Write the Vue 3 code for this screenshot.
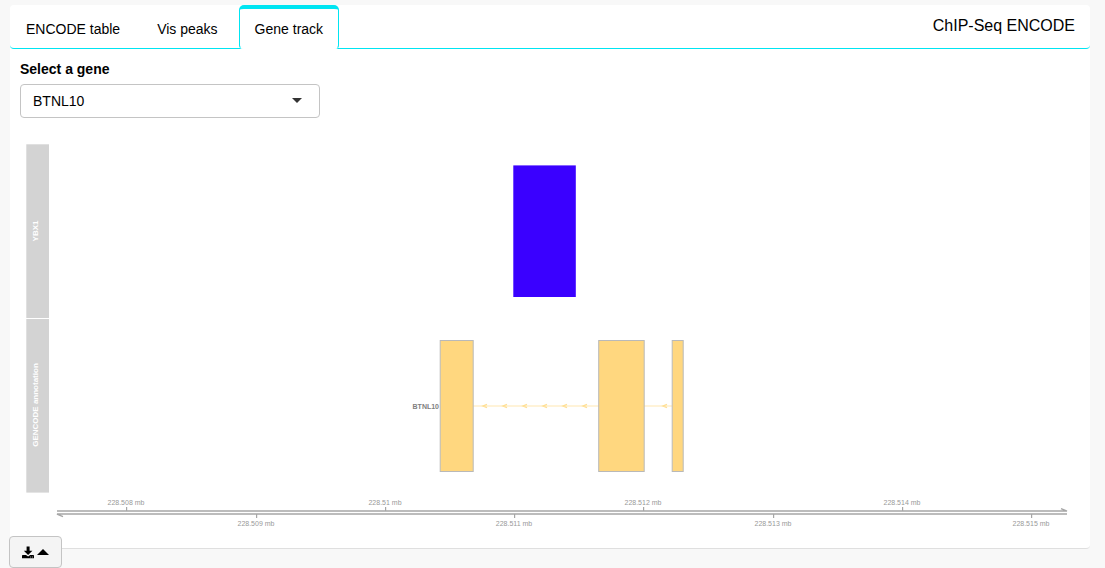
<script setup>
import { ref } from 'vue'

const tabs = ['ENCODE table', 'Vis peaks', 'Gene track']
const activeTab = ref('Gene track')
const gene = ref('BTNL10')

const exons = [
  { x: 440, width: 33 },
  { x: 598.5, width: 45.5 },
  { x: 672, width: 11 },
]
const arrows = [483, 503, 523, 543, 563, 583, 663]
const ticks = [
  { x: 126, label: '228.508 mb', top: true },
  { x: 256, label: '228.509 mb', top: false },
  { x: 385, label: '228.51 mb', top: true },
  { x: 514, label: '228.511 mb', top: false },
  { x: 643, label: '228.512 mb', top: true },
  { x: 773, label: '228.513 mb', top: false },
  { x: 902, label: '228.514 mb', top: true },
  { x: 1031, label: '228.515 mb', top: false },
]
</script>

<template>
  <main class="page">
    <section class="card">
      <header class="card-header">
        <nav class="tabs" role="tablist">
          <button
            v-for="tab in tabs"
            :key="tab"
            type="button"
            role="tab"
            class="tab"
            :class="{ active: tab === activeTab }"
            :aria-selected="tab === activeTab"
            @click="activeTab = tab"
          >{{ tab }}</button>
        </nav>
        <h1 class="title">ChIP-Seq ENCODE</h1>
      </header>

      <div class="card-body">
        <label class="field-label" for="gene">Select a gene</label>
        <div class="select-wrap">
          <select id="gene" v-model="gene" class="select">
            <option>BTNL10</option>
          </select>
          <svg class="caret" viewBox="0 0 10 5" aria-hidden="true"><path d="M0 0h10L5 5z" fill="#333" /></svg>
        </div>

        <svg class="plot" viewBox="20 128 1060 410" role="img" aria-label="Gene track">
          <g fill="#d3d3d3">
            <rect x="26.3" y="144.3" width="22.7" height="173.7" />
            <rect x="26.3" y="319" width="22.7" height="173.6" />
          </g>
          <g class="track-name">
            <text transform="translate(38 231) rotate(-90)">YBX1</text>
            <text transform="translate(38 405) rotate(-90)">GENCODE annotation</text>
          </g>

          <rect x="513.3" y="165.4" width="62.5" height="131.6" fill="#3a00ff" />

          <path d="M473 406H599M644 406H672" stroke="#ffefcb" stroke-width="1.6" />
          <path
            v-for="x in arrows"
            :key="x"
            :d="`M${x + 4} 404.3L${x} 406L${x + 4} 407.7`"
            fill="none"
            stroke="#ffdf94"
            stroke-width="1.3"
          />
          <rect
            v-for="exon in exons"
            :key="exon.x"
            :x="exon.x + 0.2"
            y="340.5"
            :width="exon.width"
            height="131"
            fill="#ffd77f"
            stroke="#b9b9b9"
          />
          <text class="gene-name" x="439" y="408.7">{{ gene }}</text>

          <g fill="none" stroke="#a6a6a6" stroke-width="1.5">
            <path d="M57 511.1H1067L1061 508.6" />
            <path d="M1067 514.1H57L63 516.6" />
            <path
              v-for="tick in ticks"
              :key="tick.label"
              :d="tick.top ? `M${tick.x + 0.6} 507V511` : `M${tick.x + 0.6} 514V518`"
              stroke-width="1.2"
            />
          </g>
          <text
            v-for="tick in ticks"
            :key="tick.label"
            class="tick-label"
            :x="tick.x"
            :y="tick.top ? 505 : 526"
          >{{ tick.label }}</text>
        </svg>
      </div>

      <button type="button" class="download" aria-label="Download">
        <svg width="12" height="13" viewBox="0 0 12 13" aria-hidden="true">
          <path d="M4.6 0.5h3v4.2h2.8L6.1 9 1.8 4.7h2.8z" />
          <path d="M0.6 9H4l2.1 1.6L8.2 9h3.2l.6.6v2.6H0V9.600z" />
          <path d="M8.200 11h.9M10 11h.9" stroke="#f4f4f4" stroke-width=".7" />
        </svg>
        <svg width="12" height="6" viewBox="0 0 12 6" aria-hidden="true"><path d="M0 6L6 0l6 6z" /></svg>
      </button>
    </section>
  </main>
</template>

<style>
body {
  background: #f8f8f8;
}
</style>

<style scoped>
.page {
  box-sizing: border-box;
  padding: 5px 15px 19px 10px;
  font-family: "Liberation Sans", Arial, sans-serif;
  font-size: 14px;
  line-height: 20px;
  color: #000;
}
.card {
  position: relative;
  background: #fff;
  border-bottom: 1px solid #dfdfdf;
  border-radius: 4px;
}
.card-header {
  display: flex;
  justify-content: space-between;
  border-bottom: 1px solid #00e5f2;
  border-radius: 4px;
}
.tabs {
  display: flex;
  gap: 5px;
  margin-bottom: -1px;
}
.tab {
  box-sizing: border-box;
  height: 44px;
  padding: 3px 15px 0;
  border: 1px solid transparent;
  border-radius: 5px 5px 4px 4px;
  background: transparent;
  color: inherit;
  font: inherit;
}
.tab.active {
  padding-top: 0;
  border-color: #00e5f2;
  border-top-width: 4px;
  border-bottom-color: #fff;
  background: #fff;
}
.title {
  margin: 11px 15px 0 0;
  font-size: 16px;
  font-weight: 400;
}
.card-body {
  padding: 10px;
}
.field-label {
  display: block;
  margin-bottom: 5px;
  font-weight: 700;
}
.select-wrap {
  position: relative;
  max-width: 300px;
}
.select {
  display: block;
  box-sizing: border-box;
  width: 100%;
  height: 34px;
  padding: 0 32px 0 12px;
  appearance: none;
  border: 1px solid #c4c4c4;
  border-radius: 4px;
  background: #fff;
  color: inherit;
  font: inherit;
}
.caret {
  position: absolute;
  top: 14px;
  right: 18px;
  width: 10px;
  height: 5px;
  pointer-events: none;
}
.plot {
  display: block;
  width: 100%;
  margin-top: 10px;
}
.track-name {
  fill: #fff;
  font-size: 8px;
  font-weight: 700;
  text-anchor: middle;
}
.gene-name {
  fill: #808080;
  font-size: 7px;
  font-weight: 700;
  text-anchor: end;
}
.tick-label {
  fill: #999;
  font-size: 7px;
  text-anchor: middle;
}
.download {
  position: absolute;
  bottom: -20px;
  left: -1px;
  display: flex;
  align-items: center;
  justify-content: center;
  gap: 3px;
  box-sizing: border-box;
  width: 53px;
  height: 32px;
  padding: 0;
  border: 1px solid #c4c4c4;
  border-radius: 4px;
  background: #f4f4f4;
}
</style>
